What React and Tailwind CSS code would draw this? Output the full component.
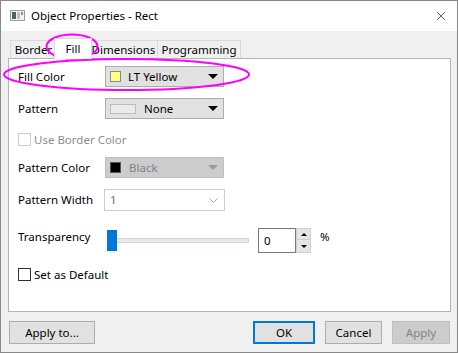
import { X } from "lucide-react";

const font = { fontFamily: '"Segoe UI", "Noto Sans", sans-serif' };

function Swatch({ className }) {
  return <span className={`block w-[11px] h-[11px] border ${className}`} />;
}

function Arrow({ color = "border-t-black" }) {
  return (
    <span
      className={`ml-auto mr-[5px] w-0 h-0 border-l-[5px] border-r-[5px] border-t-[5px] border-l-transparent border-r-transparent ${color}`}
    />
  );
}

function Combo({ children, disabled }) {
  return (
    <div
      className={`flex items-center w-[119px] h-[21px] border pl-[4px] ${
        disabled
          ? "bg-[#cccccc] border-[#bfbfbf] text-[#838383]"
          : "bg-[#e1e1e1] border-[#adadad] text-black"
      }`}
    >
      {children}
    </div>
  );
}

function Row({ label, className = "", children }) {
  return (
    <div className={`flex items-center ${className}`}>
      <span className="w-[87px] shrink-0">{label}</span>
      {children}
    </div>
  );
}

function Check({ label, disabled, className = "" }) {
  return (
    <div className={`flex items-center h-[13px] ${className}`}>
      <span
        className={`block w-[13px] h-[13px] border bg-white ${
          disabled ? "border-[#cccccc]" : "border-[#333333]"
        }`}
      />
      <span className={`ml-[3px] ${disabled ? "text-[#8d8d8d]" : "text-black"}`}>{label}</span>
    </div>
  );
}

function Tab({ label, selected, w }) {
  if (selected) {
    return (
      <div
        className="relative z-10 -ml-[3px] -mr-[2px] h-[21px] -mb-px bg-white border border-b-0 border-[#d9d9d9] flex items-center justify-center"
        style={{ width: w }}
      >
        {label}
      </div>
    );
  }
  return (
    <div
      className="-ml-px mt-[2px] h-[18px] bg-[#f0f0f0] border border-b-0 border-[#d9d9d9] flex items-center justify-center"
      style={{ width: w }}
    >
      {label}
    </div>
  );
}

function Button({ children, w, kind }) {
  const styles = {
    default: "border-2 border-[#0078d7] bg-[#e1e1e1] text-black",
    disabled: "border border-[#bfbfbf] bg-[#cccccc] text-[#838383]",
    normal: "border border-[#adadad] bg-[#e1e1e1] text-black",
  };
  return (
    <div className={`h-[23px] flex items-center justify-center ${styles[kind || "normal"]}`} style={{ width: w }}>
      {children}
    </div>
  );
}

export default function App() {
  return (
    <div className="relative w-[458px] h-[353px] border border-[#888888] bg-[#f0f0f0] text-[11.5px] leading-none text-black overflow-hidden" style={font}>
      {/* title bar */}
      <div className="h-[30px] bg-white flex items-center">
        <svg width="16" height="12" viewBox="0 0 16 12" className="ml-[9px]">
          <rect x="0.5" y="0.5" width="14" height="10" fill="#f4f4f4" stroke="#9a9a9a" />
          <rect x="2" y="2" width="4" height="7" fill="#3e6b5e" />
          <rect x="7" y="2" width="3" height="7" fill="#b8c4c0" />
          <rect x="11" y="2" width="2" height="3" fill="#7e9890" />
        </svg>
        <span className="ml-[5px]">Object Properties - Rect</span>
        <X className="ml-auto mr-[9px]" size={14} strokeWidth={1.1} />
      </div>

      {/* body */}
      <div className="pt-[7px] pl-[7px]">
        <div className="flex items-start h-[20px] pl-[3px]">
          <Tab label="Border" w={47} />
          <Tab label="Fill" w={38} selected />
          <Tab label="Dimensions" w={69} />
          <Tab label="Programming" w={84} />
        </div>

        <div className="w-[443px] h-[254px] bg-white border border-[#b4b4b4] pl-[9px]">
          <Row label="Fill Color" className="mt-[7px]">
            <Combo>
              <Swatch className="bg-[#ffff80] border-[#8a8a8a]" />
              <span className="ml-[7px]">LT Yellow</span>
              <Arrow />
            </Combo>
          </Row>

          <Row label="Pattern" className="mt-[11px]">
            <Combo>
              <span className="block w-[26px] h-[10px] border border-[#bdbdbd] bg-[#ebebeb]" />
              <span className="ml-[8px]">None</span>
              <Arrow />
            </Combo>
          </Row>

          <Check label="Use Border Color" disabled className="mt-[14px]" />

          <Row label="Pattern Color" className="mt-[11px]">
            <Combo disabled>
              <Swatch className="bg-black border-[#555555]" />
              <span className="ml-[8px]">Black</span>
              <Arrow color="border-t-[#9a9a9a]" />
            </Combo>
          </Row>

          <Row label="Pattern Width" className="mt-[11px]">
            <div className="flex items-center w-[121px] h-[22px] -ml-px border border-[#cccccc] bg-white pl-[5px] text-[#6d6d6d]">
              <span>1</span>
              <svg width="9" height="5" viewBox="0 0 9 5" className="ml-auto mr-[6px]">
                <path d="M0.5 0.5 L4.5 4.5 L8.5 0.5" fill="none" stroke="#a8a8a8" strokeWidth="1" />
              </svg>
            </div>
          </Row>

          <div className="flex items-start mt-[17px]">
            <span className="w-[87px] shrink-0 mt-[3px]">Transparency</span>
            <div className="relative w-[142px] h-[21px] mt-[2px] ml-[2px] flex items-center">
              <div className="w-full h-[5px] bg-[#e7eaea] border border-[#d6d6d6]" />
              <div className="absolute left-0 top-0 w-[10px] h-[21px] bg-[#0078d7]" />
            </div>
            <div className="ml-[9px] flex">
              <div className="w-[38px] h-[25px] border border-[#7a7a7a] bg-white flex items-center pl-[5px]">0</div>
              <div className="flex flex-col w-[15px] h-[25px]">
                <div className="h-[12px] bg-[#e5e5e5] border border-[#cfcfcf] flex items-center justify-center">
                  <span className="w-0 h-0 border-l-[3px] border-r-[3px] border-b-[3px] border-l-transparent border-r-transparent border-b-black" />
                </div>
                <div className="h-[13px] bg-[#e5e5e5] border border-t-0 border-[#cfcfcf] flex items-center justify-center">
                  <span className="w-0 h-0 border-l-[3px] border-r-[3px] border-t-[3px] border-l-transparent border-r-transparent border-t-black" />
                </div>
              </div>
            </div>
            <span className="ml-[9px] mt-[3px]">%</span>
          </div>

          <Check label="Set as Default" className="mt-[15px]" />
        </div>

        <div className="flex items-center mt-[9px] pr-[7px]">
          <div className="ml-[1px]">
            <Button w={86}>Apply to...</Button>
          </div>
          <div className="ml-auto flex gap-[10px]">
            <Button w={62} kind="default">OK</Button>
            <Button w={57}>Cancel</Button>
            <Button w={58} kind="disabled">Apply</Button>
          </div>
        </div>
      </div>

      {/* highlight annotations */}
      <svg className="absolute left-0 top-0 pointer-events-none" width="458" height="353">
        <ellipse cx="71" cy="45.5" rx="25.5" ry="12" fill="none" stroke="#ff00ff" strokeWidth="2" />
        <ellipse cx="125.5" cy="73.5" rx="122.5" ry="15.5" fill="none" stroke="#ff00ff" strokeWidth="2" />
      </svg>
    </div>
  );
}
